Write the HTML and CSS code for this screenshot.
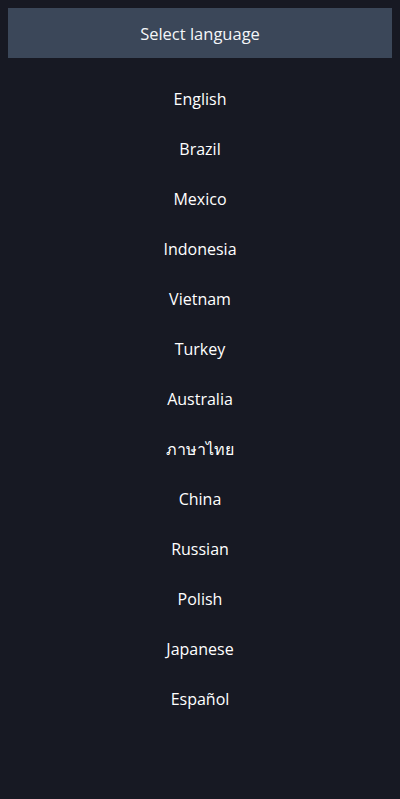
FILE: index.html
```html
<!DOCTYPE html>
<html lang="en">
<head>
    <meta charset="UTF-8">
    <meta name="viewport" content="width=device-width, initial-scale=1.0">
    <title>Select language</title>
    <link rel="stylesheet" href="styles.css">
</head>
<body>
    <div class="lang-page">
        <div class="lang-header">Select language</div>

        <ul class="lang-list">
            <li class="lang-item">English</li>
            <li class="lang-item">Brazil</li>
            <li class="lang-item">Mexico</li>
            <li class="lang-item">Indonesia</li>
            <li class="lang-item">Vietnam</li>
            <li class="lang-item">Turkey</li>
            <li class="lang-item">Australia</li>
            <li class="lang-item" lang="th">ภาษาไทย</li>
            <li class="lang-item">China</li>
            <li class="lang-item">Russian</li>
            <li class="lang-item">Polish</li>
            <li class="lang-item">Japanese</li>
            <li class="lang-item">Español</li>
        </ul>
    </div>
</body>
</html>
```

FILE: styles.css
```css
* {
    margin: 0;
    padding: 0;
    box-sizing: border-box;
}

body {
    background: #171923;
    color: #ffffff;
    font-family: 'Open Sans', 'Noto Sans', 'DejaVu Sans', sans-serif;
    font-size: 16px;
    height: 100vh;
    overflow: hidden;
}

.lang-page {
    padding: 8px;
}

.lang-header {
    height: 50px;
    display: flex;
    align-items: center;
    justify-content: center;
    background: #3b4759;
    color: #f4f6f8;
    font-size: 16.5px;
}

.lang-list {
    list-style: none;
    padding-top: 16px;
}

.lang-item {
    height: 50px;
    display: flex;
    align-items: center;
    justify-content: center;
    cursor: pointer;
}
```
